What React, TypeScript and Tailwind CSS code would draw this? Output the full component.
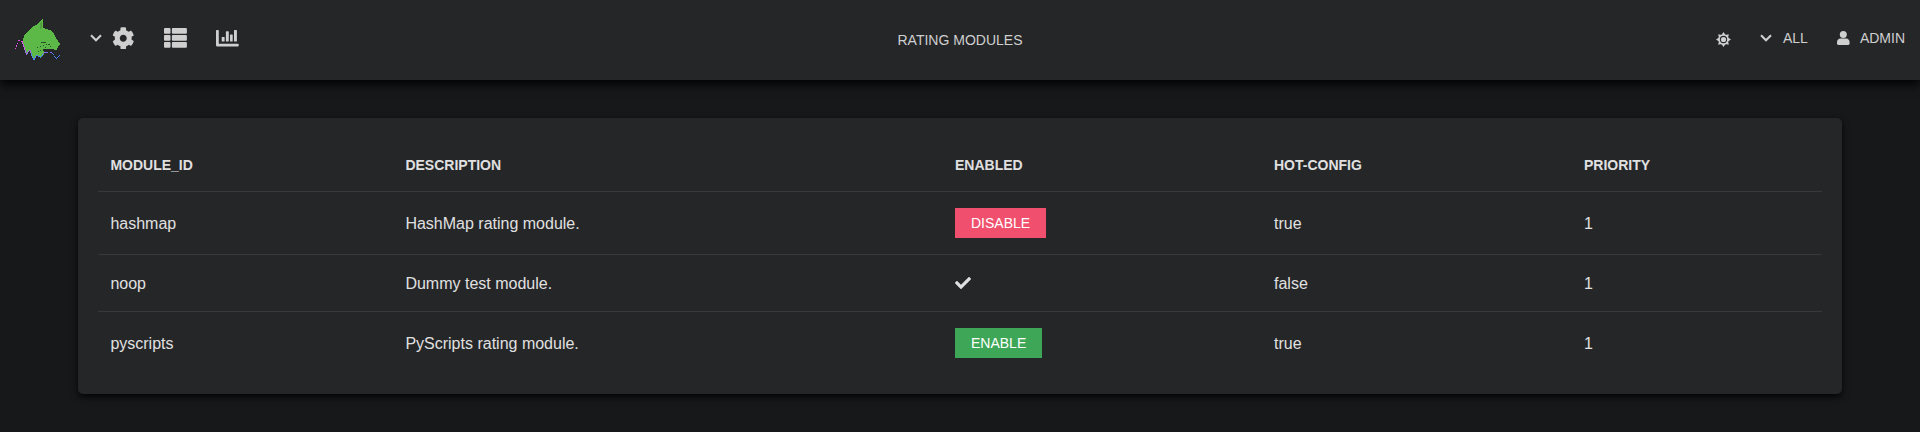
import React from "react";
import { FaCog, FaCheck } from "react-icons/fa";

function Logo() {
  return (
    <svg className="block" width="64" height="64" viewBox="0 0 64 64" shapeRendering="crispEdges" fill="none">
      <path
        d="M43 19V28L50 30L52 32L54 34L56 38L58 41L60 44L58 47L57 50L50 49L43 49L42 50L44 51V54L42 57L40 58L37 55L36 57L34 60L32 57L31 52L30 50L27 54L25 51L24 46L23 43V39L25 34L28 31L31 28L36 25Z"
        fill="#5cb947"
      />
      <path d="M42 21V28L40 29V23Z" fill="#50a03f" />
      <path d="M41 42.5H46M40 46.5H41M43 45.5H44M46 44.5H47M48 44.5H50M37 47.5H38M45 47.5H46M50 46.5H51M40 50.5H41M38 51.5H39" stroke="#27502a" />
      <path d="M15 48.5H16M16 46.5H17M16 45.5H17M17 43.5H18M18 40.5H20M21 41.5H23" stroke="#e64fe8" />
      <path d="M22.5 42V44M23.5 44V47M24.5 47V50" stroke="#d45af0" />
      <path d="M25.5 50V53M26.5 53V55M27.5 52V54M28.5 51V52M29.5 50V51M30.5 50V53" stroke="#a06cf0" />
      <path d="M31.5 53V56M32.5 56V58M33.5 58V60M34.5 58V60M35.5 56V58M36.5 55V56M37.5 55V56M38.5 56V57M39.5 56V57M40.5 57V58M41.5 56V57M42.5 54V56" stroke="#4f84ef" />
      <path d="M43 53.5H44M44 52.5H48M50 52.5H52" stroke="#8070ef" />
      <path d="M52 53.5H53M53 54.5H54M54 56.5H55M55 57.5H56M56 58.5H57M57 57.5H58M58 56.5H59M59 55.5H60" stroke="#427ff0" />
    </svg>
  );
}

function Chevron() {
  return (
    <svg className="block" width="12" height="8" viewBox="0 0 12 8" fill="none">
      <path d="M1 1.3L6 6.3L11 1.3" stroke="currentColor" strokeWidth="2.1" />
    </svg>
  );
}

function ListIcon() {
  return (
    <svg className="block" width="23" height="20" viewBox="0 0 23 20" fill="currentColor">
      {[0, 7, 14].map((y) => (
        <React.Fragment key={y}>
          <rect x="0" y={y} width="6.5" height="5.8" rx="1" />
          <rect x="7.9" y={y} width="15" height="5.8" rx="1" />
        </React.Fragment>
      ))}
    </svg>
  );
}

function ChartIcon() {
  return (
    <svg className="block" width="23" height="17" viewBox="0 0 23 17" fill="currentColor">
      <path d="M.8 0H2Q2.8 0 2.8 .8V13.8H22Q22.7 13.8 22.7 14.6V15.8Q22.7 16.6 22 16.6H1.4Q0 16.6 0 15.2V.8Q0 0 .8 0Z" />
      <rect x="5.7" y="7" width="2.9" height="4.5" rx=".6" />
      <rect x="9.9" y="1.3" width="2.9" height="10.2" rx=".6" />
      <rect x="14" y="4.6" width="2.7" height="6.9" rx=".6" />
      <rect x="18" y="0" width="2.9" height="11.5" rx=".6" />
    </svg>
  );
}

function Sun() {
  const rays = [0, 45, 90, 135, 180, 225, 270, 315];
  return (
    <svg className="block" width="15" height="15" viewBox="-7.5 -7.5 15 15" fill="none">
      <circle r="4.4" stroke="currentColor" strokeWidth="1.5" />
      <circle r="2.6" fill="currentColor" />
      {rays.map((a) => (
        <path key={a} d="M-2 -4.4L0 -7.5L2 -4.4Z" fill="currentColor" transform={`rotate(${a})`} />
      ))}
    </svg>
  );
}

function User() {
  return (
    <svg className="block" width="13" height="14" viewBox="0 0 13 14" fill="currentColor">
      <circle cx="6.3" cy="3.5" r="3.5" />
      <path d="M3.6 7.5H9Q12.6 7.8 12.6 11.5V12.6Q12.6 14 11.2 14H1.4Q0 14 0 12.6V11.5Q0 7.8 3.6 7.5Z" />
    </svg>
  );
}

const modules = [
  { id: "hashmap", description: "HashMap rating module.", action: "disable", hot: "true", priority: 1 },
  { id: "noop", description: "Dummy test module.", action: null, hot: "false", priority: 1 },
  { id: "pyscripts", description: "PyScripts rating module.", action: "enable", hot: "true", priority: 1 },
];

const columns = "grid grid-cols-[295px_549.6px_319px_310px_250px] pl-[12.4px]";

export default function App() {
  return (
    <div className="h-[432px] overflow-hidden bg-[#17181a] font-['Liberation_Sans',sans-serif] text-[#e0e0e0]">
      <header className="grid h-20 grid-cols-[1fr_auto_1fr] bg-[#252628] text-sm text-[#cfcfcf] shadow-[0_4px_10px_#000]">
        <div className="flex items-start">
          <Logo />
          <div className="mt-[34px] ml-[26px]"><Chevron /></div>
          <FaCog className="mt-[26.5px] ml-[10px] size-[22.5px]" />
          <div className="mt-[28px] ml-[29.5px]"><ListIcon /></div>
          <div className="mt-[29.5px] ml-[29px]"><ChartIcon /></div>
        </div>
        <h1 className="mt-[30px] leading-[21px]">RATING MODULES</h1>
        <div className="flex items-start justify-end pr-[15px]">
          <div className="mt-[32px] mr-[29px]"><Sun /></div>
          <div className="mt-[34px]"><Chevron /></div>
          <span className="mt-[28px] ml-[11px] leading-[21px]">ALL</span>
          <div className="mt-[31px] ml-[29px]"><User /></div>
          <span className="mt-[28px] ml-[10px] leading-[21px]">ADMIN</span>
        </div>
      </header>
      <main className="mx-[78px] mt-[38px] h-[276px] rounded-[5px] bg-[#252628] p-5 shadow-[0_3px_7px_rgba(0,0,0,0.85)]">
        <div className={`${columns} h-[53px] pt-[17px] text-sm leading-[21px] font-bold`}>
          <span>MODULE_ID</span>
          <span>DESCRIPTION</span>
          <span>ENABLED</span>
          <span>HOT-CONFIG</span>
          <span>PRIORITY</span>
        </div>
        {modules.map((m) => (
          <div
            key={m.id}
            className={`${columns} items-center border-t border-[#38393b] text-base leading-6 ${m.action ? "h-[63px]" : "h-[57px]"}`}
          >
            <span className="pt-0.5">{m.id}</span>
            <span className="pt-0.5">{m.description}</span>
            <div>
              {m.action === "disable" && (
                <button className="block h-[30px] bg-[#f0506e] px-4 text-sm leading-[30px] text-white">DISABLE</button>
              )}
              {m.action === "enable" && (
                <button className="block h-[30px] bg-[#3da757] px-4 text-sm leading-[30px] text-white">ENABLE</button>
              )}
              {!m.action && <FaCheck className="size-4" />}
            </div>
            <span className="pt-0.5">{m.hot}</span>
            <span className="pt-0.5">{m.priority}</span>
          </div>
        ))}
      </main>
    </div>
  );
}
